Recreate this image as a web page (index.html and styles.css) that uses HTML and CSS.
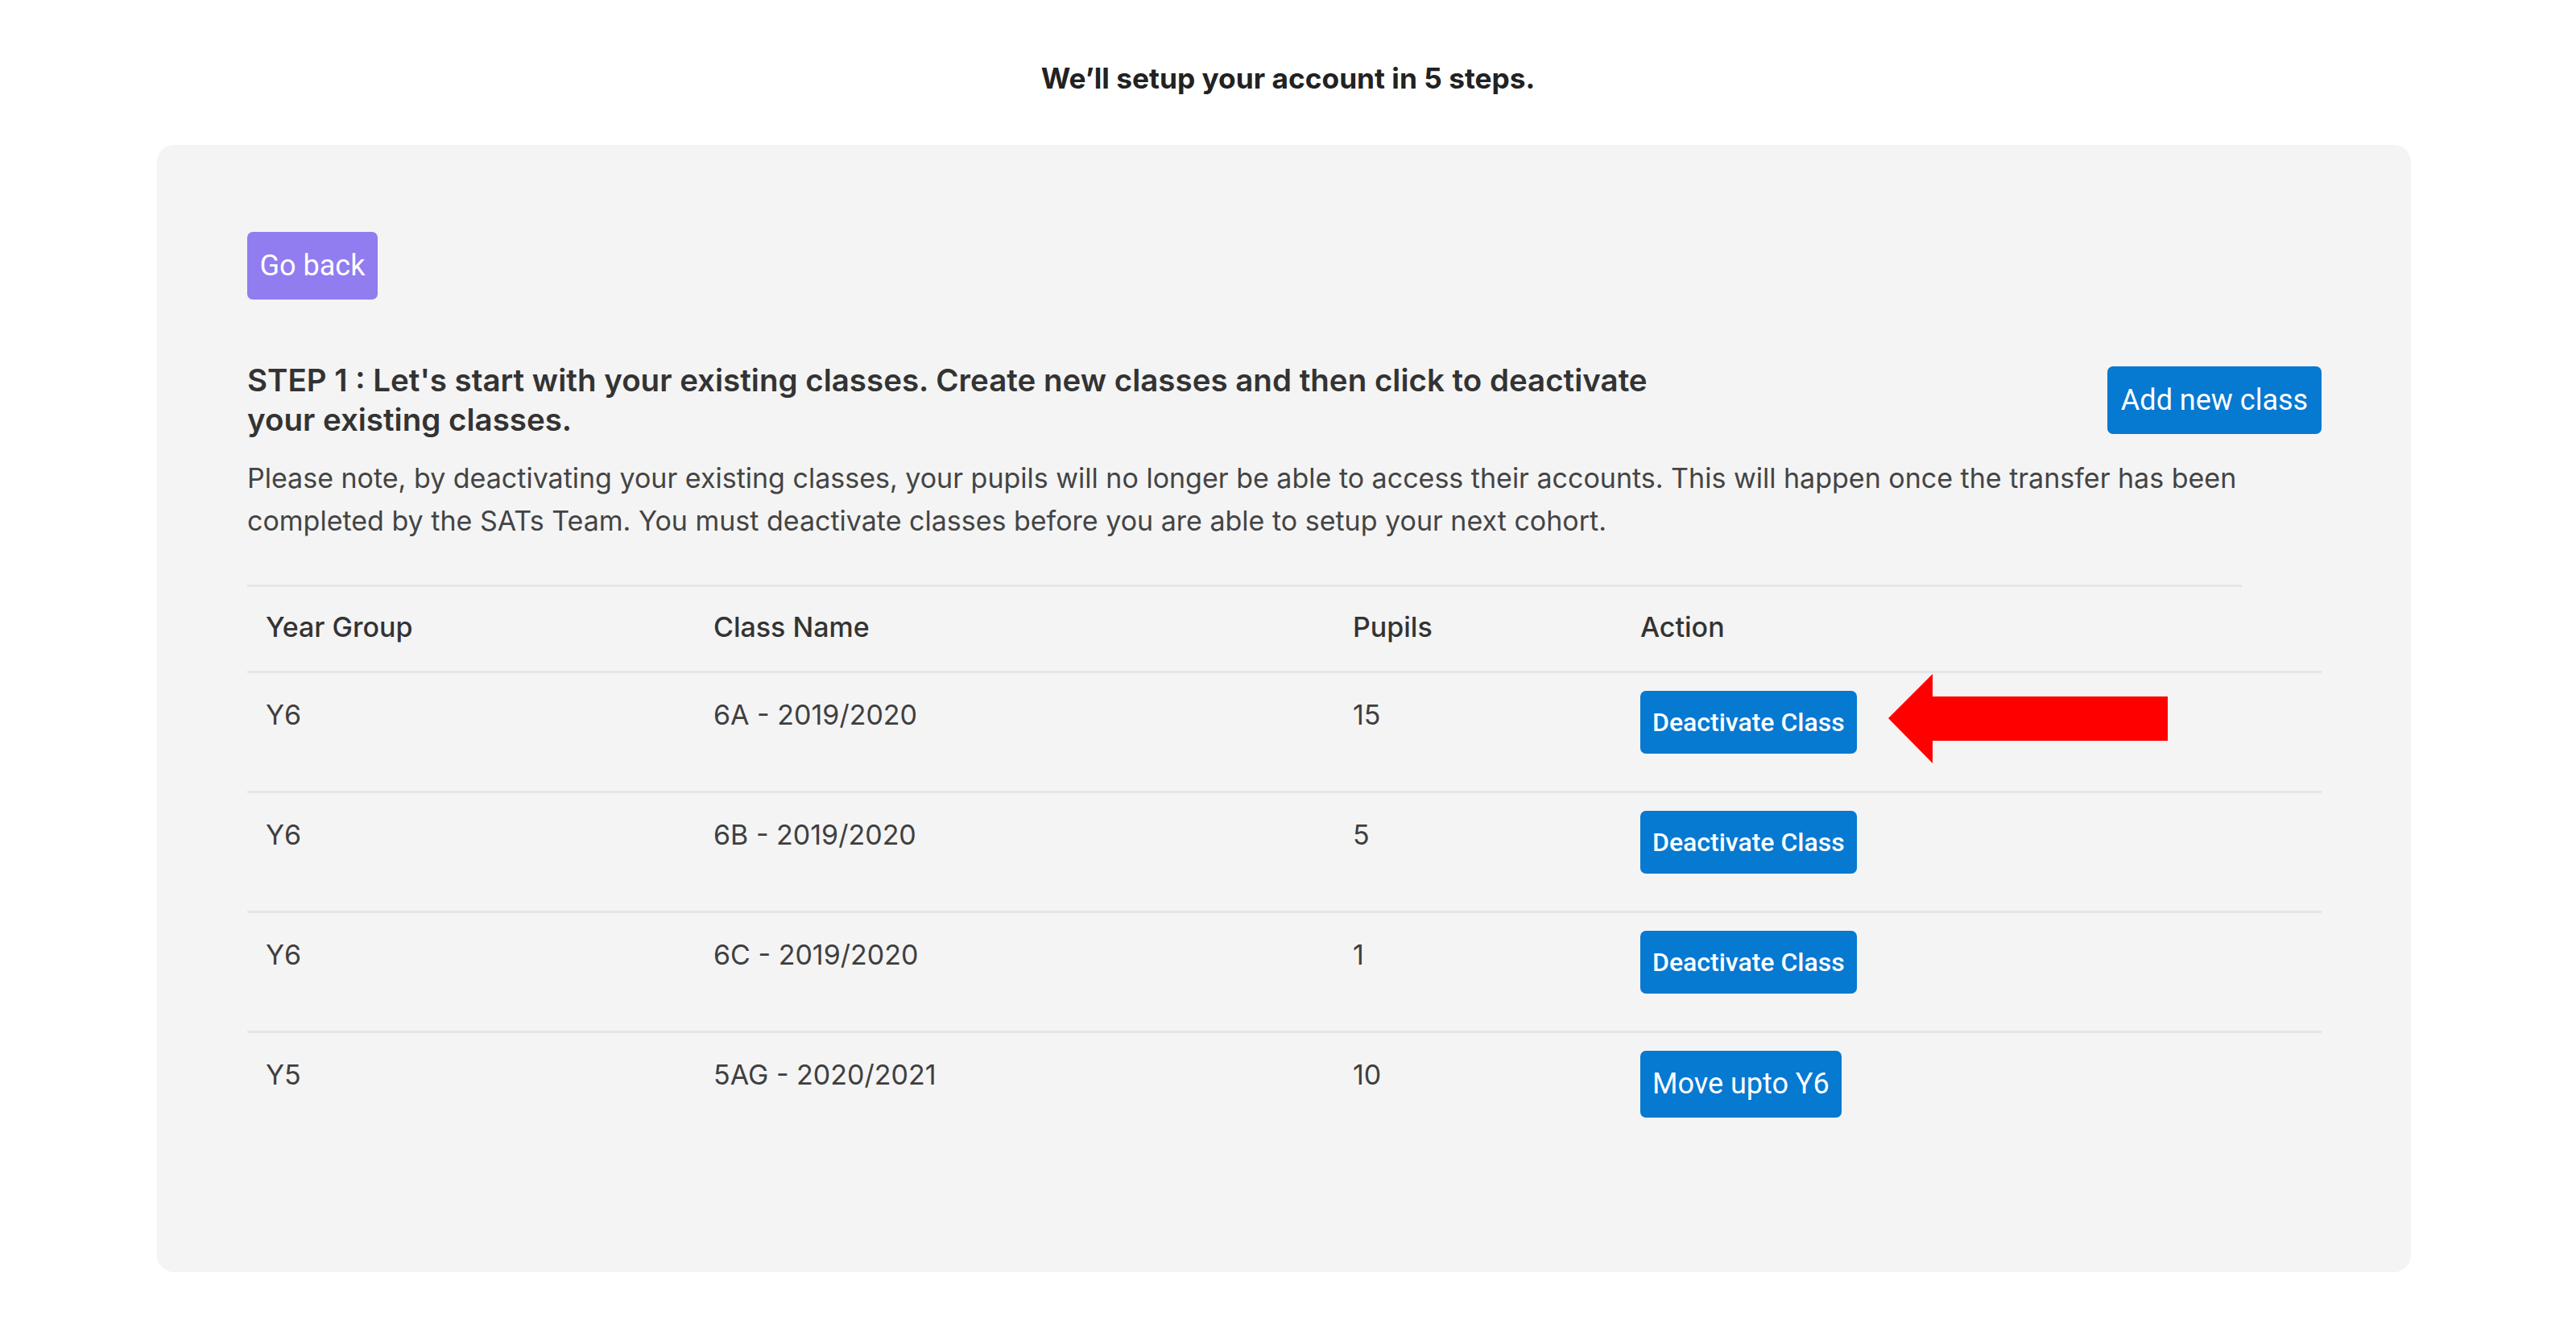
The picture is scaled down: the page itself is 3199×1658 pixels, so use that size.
FILE: index.html
```html
<!DOCTYPE html>
<html lang="en">
<head>
<meta charset="utf-8">
<title>Setup your account</title>
<link rel="stylesheet" href="styles.css">
</head>
<body>
<h1 class="page-title">We’ll setup your account in 5 steps.</h1>
<div class="card">
  <button class="btn btn-purple">Go back</button>
  <div class="step-head">
    <h2 class="step-title">STEP 1 : Let's start with your existing classes. Create new classes and then click to deactivate your existing classes.</h2>
    <button class="btn btn-blue btn-add">Add new class</button>
  </div>
  <p class="note">Please note, by deactivating your existing classes, your pupils will no longer be able to access their accounts. This will happen once the transfer has been completed by the SATs Team. You must deactivate classes before you are able to setup your next cohort.</p>
  <div class="table-rule"></div>
  <table class="classes">
    <thead>
      <tr><th class="c1">Year Group</th><th class="c2">Class Name</th><th class="c3">Pupils</th><th class="c4">Action</th></tr>
    </thead>
    <tbody>
      <tr><td>Y6</td><td>6A - 2019/2020</td><td>15</td><td><button class="btn btn-blue btn-sm">Deactivate Class</button></td></tr>
      <tr><td>Y6</td><td>6B - 2019/2020</td><td>5</td><td><button class="btn btn-blue btn-sm">Deactivate Class</button></td></tr>
      <tr><td>Y6</td><td>6C - 2019/2020</td><td>1</td><td><button class="btn btn-blue btn-sm">Deactivate Class</button></td></tr>
      <tr class="last"><td>Y5</td><td>5AG - 2020/2021</td><td>10</td><td><button class="btn btn-blue btn-md">Move upto Y6</button></td></tr>
    </tbody>
  </table>
  <svg class="arrow" width="347" height="111" viewBox="0 0 347 111"><polygon points="0,55 55,0 55,28 347,28 347,83 55,83 55,111" fill="#ff0000"/></svg>
</div>
</body>
</html>
```

FILE: styles.css
```css
html, body {
  margin: 0;
  padding: 0;
  background: #ffffff;
}
body {
  font-family: "Inter", "Noto Sans", sans-serif;
  color: #333333;
}
.page-title {
  margin: 0;
  padding-top: 78px;
  height: 180px;
  box-sizing: border-box;
  text-align: center;
  font-size: 35.3px;
  line-height: 40px;
  font-weight: 700;
  color: #222222;
}
.card {
  position: relative;
  margin-left: 195px;
  width: 2799px;
  box-sizing: border-box;
  background: #f4f4f4;
  border-radius: 22px;
  padding: 108px 111px 150px 112px;
  box-shadow: 0 0 2px rgba(0,0,0,0.04);
}
.btn {
  font-family: "Roboto", "Liberation Sans", sans-serif;
  color: #ffffff;
  border: 0;
  border-radius: 7px;
  cursor: pointer;
  white-space: nowrap;
}
.btn-purple {
  background: #917cf0;
  height: 84px;
  width: 162px;
  font-size: 36px;
  padding: 0;
  display: block;
}
.btn-blue {
  background: #0679d1;
}
.btn-add {
  height: 84px;
  width: 266px;
  font-size: 36px;
  padding: 0;
  flex: none;
}
.step-head {
  display: flex;
  align-items: center;
  justify-content: space-between;
  margin-top: 76px;
}
.step-title {
  margin: 0;
  width: 1800px;
  font-size: 38.5px;
  line-height: 49px;
  font-weight: 600;
  color: #333333;
}
.note {
  margin: 21px 0 0 0;
  font-size: 34px;
  line-height: 53px;
  color: #444444;
}
.table-rule {
  margin-top: 53px;
  width: 2477px;
  height: 3px;
  background: #e3e5e8;
}
.classes {
  width: 100%;
  border-collapse: collapse;
  font-size: 34px;
  color: #3f3f3f;
}
.classes th {
  text-align: left;
  font-weight: 500;
  color: #333333;
  height: 105px;
  padding: 0 0 4px 23px;
  box-sizing: border-box;
  vertical-align: middle;
  border-bottom: 3px solid #e3e5e8;
}
.classes .c1 { width: 556px; }
.classes .c2 { width: 794px; }
.classes .c3 { width: 357px; }
.classes td {
  vertical-align: top;
  padding: 22px 0 0 23px;
  line-height: 60px;
  height: 149px;
  box-sizing: border-box;
  border-bottom: 3px solid #e3e5e8;
}
.classes tr.last td {
  border-bottom: 0;
}
.btn-sm {
  height: 78px;
  padding: 0 15px;
  font-size: 32px;
  font-weight: 500;
  display: block;
}
.btn-md {
  height: 83px;
  padding: 0 15px;
  font-size: 36px;
  display: block;
}
.arrow {
  position: absolute;
  left: 2150px;
  top: 657px;
}
```
